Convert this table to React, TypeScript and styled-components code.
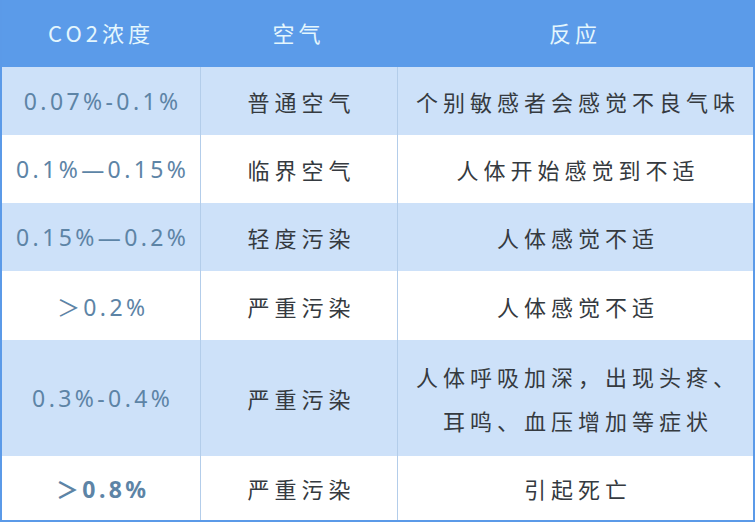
import React from "react";
import styled, { createGlobalStyle } from "styled-components";

const GlobalStyle = createGlobalStyle`
  html, body {
    margin: 0;
    padding: 0;
    background: #ffffff;
  }
  body {
    font-family: "Noto Sans", "Noto Sans CJK SC", sans-serif;
  }
`;

const Table = styled.div`
  width: 755px;
  box-sizing: border-box;
  border: 2px solid #5b9ae8;
  border-top: none;
  display: grid;
  grid-template-columns: 198px 197px 1fr;
`;

const HeadCell = styled.div`
  height: 67px;
  background: #5b9be9;
  color: #e4f6fd;
  font-family: "Noto Sans CJK SC", sans-serif;
  font-size: 22px;
  letter-spacing: 4px;
  display: flex;
  align-items: center;
  justify-content: center;
  padding-bottom: 3px;
  box-sizing: border-box;
`;

const Cell = styled.div<{ $shaded: boolean; $height: number; $first?: boolean }>`
  height: ${(p) => p.$height}px;
  background: ${(p) => (p.$shaded ? "#cde1f9" : "#ffffff")};
  border-left: ${(p) => (p.$first ? "none" : "1px solid #b3cdea")};
  display: flex;
  align-items: center;
  justify-content: center;
  text-align: center;
  box-sizing: border-box;
`;

const Level = styled.span<{ $bold?: boolean }>`
  font-family: "Noto Sans", "Noto Sans CJK SC", sans-serif;
  font-size: 23px;
  letter-spacing: 3.4px;
  margin-right: -3.4px;
  color: #5d84a6;
  font-weight: ${(p) => (p.$bold ? 700 : 400)};
`;

const Label = styled.span`
  font-family: "Noto Sans CJK SC", sans-serif;
  font-size: 22px;
  letter-spacing: 5px;
  margin-right: -5px;
  color: #353a40;
  line-height: 44px;
`;

type Row = {
  level: string;
  air: string;
  effect: React.ReactNode;
  height: number;
  bold?: boolean;
};

const rows: Row[] = [
  { level: "0.07%-0.1%", air: "普通空气", effect: "个别敏感者会感觉不良气味", height: 68 },
  { level: "0.1%—0.15%", air: "临界空气", effect: "人体开始感觉到不适", height: 68 },
  { level: "0.15%—0.2%", air: "轻度污染", effect: "人体感觉不适", height: 68 },
  { level: "＞0.2%", air: "严重污染", effect: "人体感觉不适", height: 69 },
  {
    level: "0.3%-0.4%",
    air: "严重污染",
    effect: (
      <>
        人体呼吸加深，出现头疼、
        <br />
        耳鸣、血压增加等症状
      </>
    ),
    height: 116,
  },
  { level: "＞0.8%", air: "严重污染", effect: "引起死亡", height: 64, bold: true },
];

const App: React.FC = () => {
  return (
    <>
      <GlobalStyle />
      <Table>
        <HeadCell>CO2浓度</HeadCell>
        <HeadCell>空气</HeadCell>
        <HeadCell>反应</HeadCell>
        {rows.map((r, i) => {
          const shaded = i % 2 === 0;
          return (
            <React.Fragment key={i}>
              <Cell $shaded={shaded} $height={r.height} $first>
                <Level $bold={r.bold}>{r.level}</Level>
              </Cell>
              <Cell $shaded={shaded} $height={r.height}>
                <Label>{r.air}</Label>
              </Cell>
              <Cell $shaded={shaded} $height={r.height}>
                <Label>{r.effect}</Label>
              </Cell>
            </React.Fragment>
          );
        })}
      </Table>
    </>
  );
};

export default App;
